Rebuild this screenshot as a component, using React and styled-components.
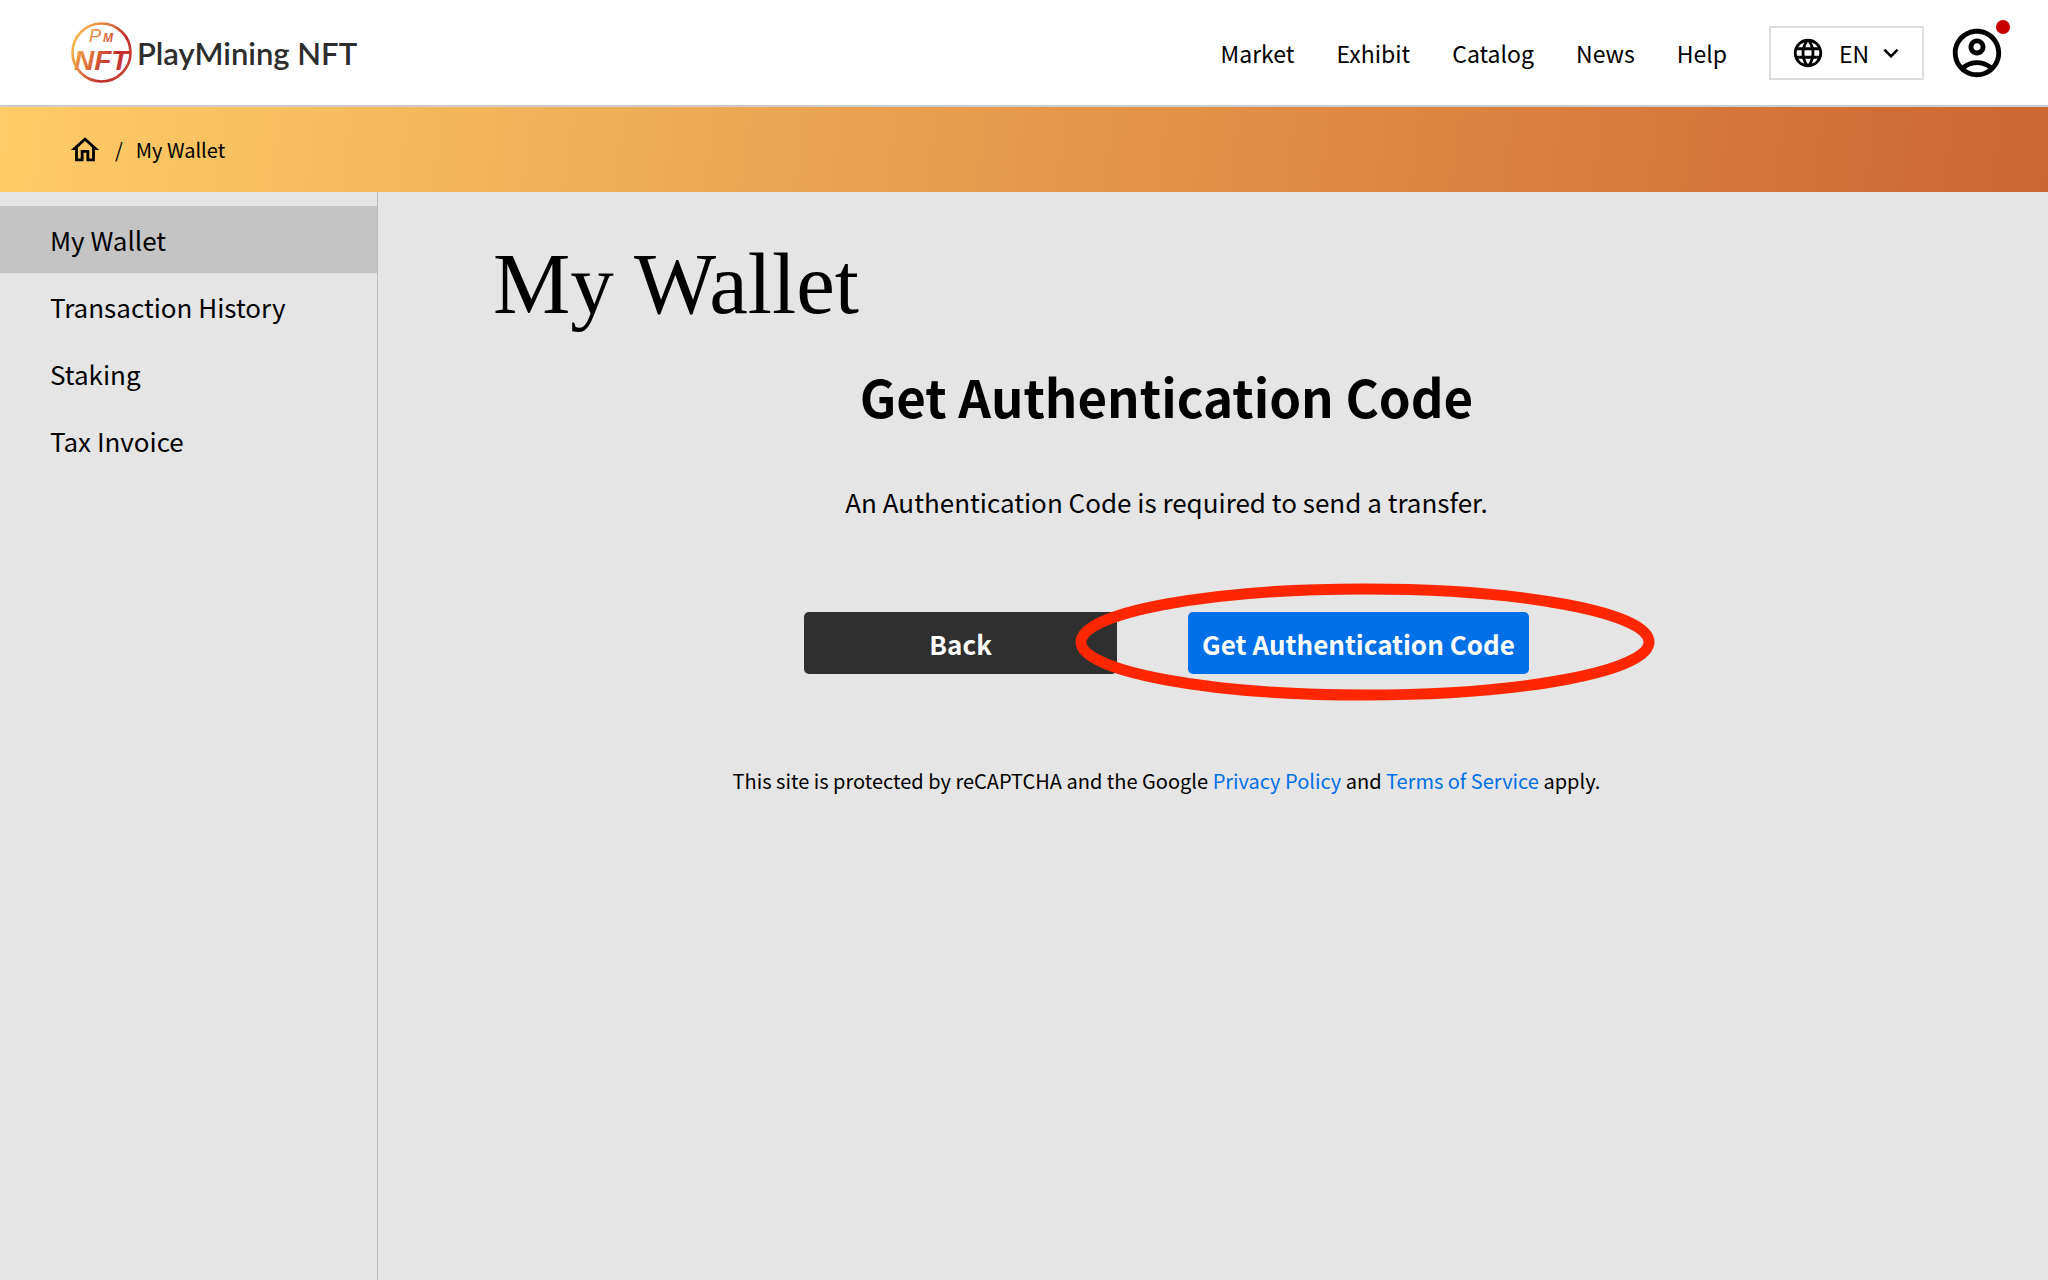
import styled, { createGlobalStyle } from "styled-components";
import {
  MdExpandMore,
  MdLanguage,
  MdOutlineAccountCircle,
  MdOutlineHome,
} from "react-icons/md";

const GlobalStyle = createGlobalStyle`
  :root {
    --color-ink: #000;
    --color-page: #e5e5e5;
    --color-active: #c4c4c4;
    --color-dark: #2f2f2f;
    --color-blue: #0070e8;
    --color-red: #c80000;
  }

  * {
    box-sizing: border-box;
  }

  body {
    margin: 0;
    background-color: var(--color-page);
    color: var(--color-ink);
    font-family: "Noto Sans CJK JP", "Noto Sans", sans-serif;
    font-size: 26px;
  }

  a {
    color: inherit;
    text-decoration: none;
  }
`;

const Page = styled.div`
  display: flex;
  flex-direction: column;
  min-height: 100vh;
`;

const Header = styled.header`
  display: flex;
  align-items: center;
  justify-content: space-between;
  height: 107px;
  padding: 0 42px 0 70px;
  background-color: #fff;
  border-bottom: 2px solid #ccc;
`;

const Logo = styled.a`
  display: flex;
  align-items: center;
  gap: 4px;
`;

const LogoText = styled.span`
  color: #2d2d2d;
  font-family: Lato, sans-serif;
  font-size: 31px;
  font-weight: 600;
  line-height: 40px;
`;

const HeaderRight = styled.div`
  display: flex;
  align-items: center;
`;

const Nav = styled.nav`
  display: flex;
  gap: 42px;
  margin-right: 42px;
  font-size: 23px;
  line-height: 40px;
`;

const LanguageBox = styled.label`
  display: flex;
  align-items: center;
  height: 54px;
  padding: 0 16px 0 20px;
  border: 2px solid #ddd;
  margin-right: 24px;
`;

const LanguageSelect = styled.select`
  appearance: none;
  padding: 0;
  margin: 0 6px 0 14px;
  border: none;
  background: none;
  color: inherit;
  font-family: inherit;
  font-size: 23px;
`;

const AccountButton = styled.button`
  position: relative;
  display: flex;
  padding: 0;
  border: none;
  background: none;
  color: inherit;
  cursor: pointer;
`;

const AccountDot = styled.span`
  position: absolute;
  top: -4px;
  right: -4px;
  width: 14px;
  height: 14px;
  border-radius: 50%;
  background-color: var(--color-red);
`;

const Breadcrumb = styled.nav`
  display: flex;
  align-items: center;
  gap: 13px;
  height: 85px;
  padding: 0 68px;
  background: linear-gradient(98deg, #fc6 0%, #c63 100%);
  font-size: 20px;
  line-height: 28px;

  a {
    display: flex;
  }
`;

const Body = styled.div`
  display: flex;
  flex: 1;
`;

const Sidebar = styled.aside`
  flex: 0 0 378px;
  padding-top: 14px;
  border-right: 1px solid #bbb;
`;

const SidebarLink = styled.a`
  display: flex;
  align-items: center;
  height: 67px;
  padding: 0 50px;
  background-color: ${({ $active }) =>
    $active ? "var(--color-active)" : "transparent"};
`;

const Main = styled.main`
  flex: 1;
  padding: 32px 208px 0 115px;
`;

const Title = styled.h1`
  margin: 0;
  font-family: "Liberation Serif", serif;
  font-size: 87px;
  font-weight: 400;
  line-height: 120px;
`;

const AuthSection = styled.section`
  display: flex;
  flex-direction: column;
  align-items: center;
`;

const AuthTitle = styled.h2`
  margin: 12px 0 0;
  font-size: 51px;
  font-weight: 700;
  line-height: 80px;
`;

const AuthText = styled.p`
  margin: 46px 0 0;
  line-height: 40px;
`;

const Actions = styled.div`
  display: flex;
  gap: 71px;
  margin-top: 90px;
`;

const ActionItem = styled.div`
  position: relative;
`;

const Button = styled.button`
  min-width: 313px;
  height: 62px;
  padding: 0 14px;
  border: none;
  border-radius: 5px;
  background-color: ${({ $primary }) =>
    $primary ? "var(--color-blue)" : "var(--color-dark)"};
  color: #fff;
  font-family: inherit;
  font-size: 26px;
  font-weight: 700;
  cursor: pointer;
`;

const Highlight = styled.svg`
  position: absolute;
  top: -29px;
  left: -113px;
  pointer-events: none;
`;

const Notice = styled.p`
  margin: 91px 0 0;
  font-size: 20px;
  line-height: 32px;

  a {
    color: var(--color-blue);
  }
`;

const navItems = ["Market", "Exhibit", "Catalog", "News", "Help"];
const sidebarItems = ["My Wallet", "Transaction History", "Staking", "Tax Invoice"];

function Emblem() {
  return (
    <svg width="63" height="63" viewBox="0 0 63 63" aria-hidden="true">
      <defs>
        <linearGradient
          id="emblem"
          gradientUnits="userSpaceOnUse"
          x1="8"
          y1="16"
          x2="54"
          y2="42"
        >
          <stop offset="0" stopColor="#f3b34a" />
          <stop offset="0.45" stopColor="#dd6a38" />
          <stop offset="0.8" stopColor="#bf2a2c" />
          <stop offset="1" stopColor="#c93a30" />
        </linearGradient>
      </defs>
      <circle
        cx="31.5"
        cy="31.5"
        r="29"
        fill="none"
        stroke="url(#emblem)"
        strokeWidth="2.6"
      />
      <g
        fill="url(#emblem)"
        fontFamily="Liberation Sans, sans-serif"
        fontStyle="italic"
      >
        <text x="19" y="21" fontSize="18">
          P
        </text>
        <text x="33" y="21" fontSize="12" fontWeight="700">
          M
        </text>
        <text x="4" y="49" fontSize="28" fontWeight="700">
          NFT
        </text>
      </g>
    </svg>
  );
}

function App() {
  return (
    <>
      <GlobalStyle />
      <Page>
        <Header>
          <Logo href="#">
            <Emblem />
            <LogoText>PlayMining NFT</LogoText>
          </Logo>
          <HeaderRight>
            <Nav>
              {navItems.map((item) => (
                <a href="#" key={item}>
                  {item}
                </a>
              ))}
            </Nav>
            <LanguageBox>
              <MdLanguage size={34} />
              <LanguageSelect aria-label="Language" defaultValue="en">
                <option value="en">EN</option>
              </LanguageSelect>
              <MdExpandMore size={30} />
            </LanguageBox>
            <AccountButton aria-label="Account">
              <MdOutlineAccountCircle size={58} />
              <AccountDot />
            </AccountButton>
          </HeaderRight>
        </Header>

        <Breadcrumb aria-label="Breadcrumb">
          <a href="#" aria-label="Home">
            <MdOutlineHome size={34} />
          </a>
          <span>/</span>
          <span>My Wallet</span>
        </Breadcrumb>

        <Body>
          <Sidebar>
            {sidebarItems.map((item) => (
              <SidebarLink href="#" key={item} $active={item === "My Wallet"}>
                {item}
              </SidebarLink>
            ))}
          </Sidebar>

          <Main>
            <Title>My Wallet</Title>
            <AuthSection>
              <AuthTitle>Get Authentication Code</AuthTitle>
              <AuthText>
                An Authentication Code is required to send a transfer.
              </AuthText>
              <Actions>
                <ActionItem>
                  <Button type="button">Back</Button>
                </ActionItem>
                <ActionItem>
                  <Button type="button" $primary>
                    Get Authentication Code
                  </Button>
                  <Highlight width="580" height="118" aria-hidden="true">
                    <ellipse
                      cx="290"
                      cy="59"
                      rx="284"
                      ry="53"
                      fill="none"
                      stroke="#ff2600"
                      strokeWidth="11"
                    />
                  </Highlight>
                </ActionItem>
              </Actions>
              <Notice>
                This site is protected by reCAPTCHA and the Google{" "}
                <a href="#">Privacy Policy</a> and{" "}
                <a href="#">Terms of Service</a> apply.
              </Notice>
            </AuthSection>
          </Main>
        </Body>
      </Page>
    </>
  );
}

export default App;
